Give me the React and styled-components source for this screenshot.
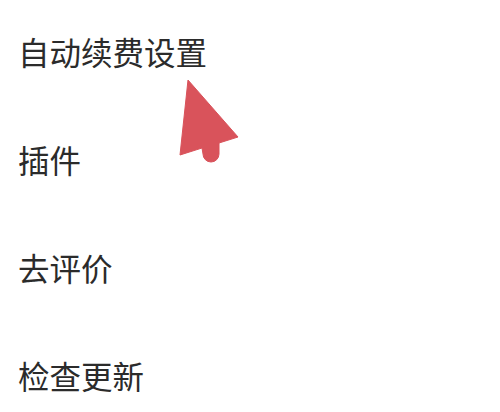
import React from "react";
import styled, { createGlobalStyle } from "styled-components";

const items = ["自动续费设置", "插件", "去评价", "检查更新"];

function App() {
  return (
    <Page>
      <GlobalStyle />
      <List>
        {items.map((label) => (
          <Row key={label}>{label}</Row>
        ))}
      </List>
      <Pointer width="500" height="412" viewBox="0 0 500 412">
        <path
          d="M188 80 L238 137 L219 143 L219 154 A8 8 0 0 1 203 154 L202 148 L180 155 Z"
          fill="#d9535b"
          stroke="#d9535b"
          strokeWidth="1"
          strokeLinejoin="round"
        />
      </Pointer>
    </Page>
  );
}

export default App;

const GlobalStyle = createGlobalStyle`
  html, body {
    margin: 0;
    padding: 0;
    background: #ffffff;
  }
  body {
    font-family: "Noto Sans CJK SC", "Noto Sans", sans-serif;
  }
`;

const Page = styled.div`
  position: relative;
  width: 500px;
  height: 412px;
  overflow: hidden;
  background: #ffffff;
`;

const List = styled.ul`
  list-style: none;
  margin: -3px 0 0 0;
  padding: 0;
  display: flex;
  flex-direction: column;
`;

const Row = styled.li`
  height: 108px;
  display: flex;
  align-items: center;
  padding-left: 18px;
  font-size: 31.5px;
  font-weight: 400;
  color: #2b2b2b;
  letter-spacing: 0;
`;

const Pointer = styled.svg`
  position: absolute;
  left: 0;
  top: 0;
  pointer-events: none;
`;
